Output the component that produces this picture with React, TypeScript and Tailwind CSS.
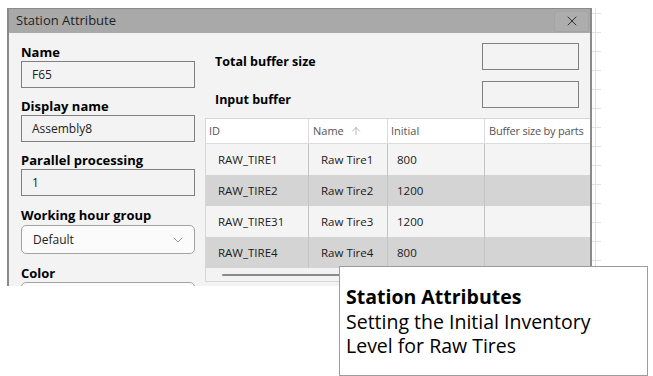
import { X, ChevronDown, ArrowUp } from "lucide-react";

const rows = [
  { id: "RAW_TIRE1", name: "Raw Tire1", initial: "800" },
  { id: "RAW_TIRE2", name: "Raw Tire2", initial: "1200" },
  { id: "RAW_TIRE31", name: "Raw Tire3", initial: "1200" },
  { id: "RAW_TIRE4", name: "Raw Tire4", initial: "800" },
];

const ticks = Array.from({ length: 15 }, (_, i) => i);

function Field({ label, value, top }: { label: string; value: string; top: string }) {
  return (
    <div className={top}>
      <div className="text-[13px] font-bold leading-[18px] text-black">{label}</div>
      <div className="h-[27px] border border-[#7f7f7f] bg-[#f3f3f3] px-[10px] flex items-center text-[12px] text-[#222]">
        {value}
      </div>
    </div>
  );
}

export default function App() {
  return (
    <div
      className="relative w-[653px] h-[376px] bg-white overflow-hidden"
      style={{ fontFamily: '"Open Sans", "Noto Sans", sans-serif' }}
    >
      <div className="flex pt-[8px] pl-[7px]">
        {/* dialog */}
        <div className="w-[585px] h-[278px] border-l-2 border-r-2 border-t border-[#8a8a8a] flex flex-col overflow-hidden">
          <div className="h-[24px] bg-[#a9a9a9] flex items-center justify-between pl-[7px] pr-[1px] shrink-0">
            <span className="text-[13px] text-[#1f1f1f]">Station Attribute</span>
            <div className="w-[35px] h-[21px] rounded-[3px] bg-[#adadad] border border-[#a4a4a4] flex items-center justify-center">
              <X size={16} strokeWidth={1.4} className="text-[#2a2a2a]" />
            </div>
          </div>
          <div className="flex-1 bg-[#f3f3f3] flex pl-[12px] gap-[10px]">
            {/* left column */}
            <div className="w-[174px] shrink-0 flex flex-col">
              <Field label="Name" value="F65" top="mt-[10px]" />
              <Field label="Display name" value="Assembly8" top="mt-[9px]" />
              <Field label="Parallel processing" value="1" top="mt-[9px]" />
              <div className="mt-[10px]">
                <div className="text-[13px] font-bold leading-[18px] text-black">Working hour group</div>
                <div className="mt-[1px] h-[29px] rounded-[5px] border border-[#a3a3a3] bg-[#fbfbfb] pl-[11px] pr-[8px] flex items-center justify-between text-[12px] text-[#222]">
                  <span>Default</span>
                  <ChevronDown size={16} strokeWidth={1} className="text-[#666]" />
                </div>
              </div>
              <div className="mt-[10px]">
                <div className="text-[13px] font-bold leading-[18px] text-black">Color</div>
                <div className="h-[29px] rounded-[5px] border border-[#a3a3a3] bg-[#fbfbfb]" />
              </div>
            </div>
            {/* right column */}
            <div className="flex-1 flex flex-col min-w-0">
              <div className="flex justify-between items-start pl-[10px] pr-[11px] mt-[10px]">
                <span className="text-[12.5px] font-bold mt-[10px] leading-[18px]">Total buffer size</span>
                <div className="w-[97px] h-[27px] border border-[#7f7f7f] bg-[#f3f3f3]" />
              </div>
              <div className="flex justify-between items-start pl-[10px] pr-[11px] mt-[10px]">
                <span className="text-[12.5px] font-bold mt-[10px] leading-[18px]">Input buffer</span>
                <div className="w-[97px] h-[27px] border border-[#7f7f7f] bg-[#f3f3f3]" />
              </div>
              {/* table */}
              <div className="mt-[9px] w-[400px] border border-[#d6d6d6] bg-[#f3f3f3] text-[11.5px]">
                <div className="flex h-[25px] bg-white text-[#555] border-b border-[#dcdcdc] text-[11px]">
                  <div className="w-[103px] pl-[3px] flex items-center border-r border-[#dcdcdc]">ID</div>
                  <div className="w-[79px] pl-[4px] flex items-center gap-[6px] border-r border-[#dcdcdc]">
                    Name
                    <ArrowUp size={12} strokeWidth={1} className="text-[#777]" />
                  </div>
                  <div className="w-[97px] pl-[3px] flex items-center border-r border-[#dcdcdc]">Initial</div>
                  <div className="flex-1 pl-[4px] flex items-center whitespace-nowrap tracking-[-0.2px]">Buffer size by parts</div>
                </div>
                {rows.map((r, i) => (
                  <div
                    key={r.id}
                    className={`flex h-[31px] text-[#1a1a1a] ${i % 2 === 1 ? "bg-[#d4d4d4]" : "bg-[#f4f4f4]"}`}
                  >
                    <div className="w-[103px] pl-[12px] flex items-center border-r border-[#c4c4c4]">{r.id}</div>
                    <div className="w-[79px] pl-[12px] flex items-center border-r border-[#c4c4c4]">{r.name}</div>
                    <div className="w-[97px] pl-[9px] flex items-center border-r border-[#c4c4c4]">{r.initial}</div>
                    <div className="flex-1" />
                  </div>
                ))}
                <div className="h-[13px] flex items-center pl-[16px]">
                  <div className="w-[140px] h-[2px] bg-[#8a8a8a] rounded-full" />
                </div>
              </div>
            </div>
          </div>
        </div>
        {/* background grid beyond the dialog */}
        <div className="relative w-[10px] h-[278px]">
          <div className="absolute left-[3px] top-0 bottom-0 w-px bg-[#e2e2e2]" />
          {ticks.map((t) => (
            <div
              key={t}
              className="absolute left-0 w-[9px] h-px bg-[#e2e2e2]"
              style={{ top: 5 + t * 19 }}
            />
          ))}
        </div>
      </div>

      {/* caption tooltip */}
      <div className="absolute left-[339px] top-[266px] w-[309px] h-[110px] bg-white border border-[#9c9c9c] pl-[6px] pt-[18px] text-black">
        <div className="text-[19.5px] font-bold leading-[24.5px]">Station Attributes</div>
        <div className="text-[19.5px] leading-[24.5px]">Setting the Initial Inventory</div>
        <div className="text-[19.5px] leading-[24.5px]">Level for Raw Tires</div>
      </div>
    </div>
  );
}
